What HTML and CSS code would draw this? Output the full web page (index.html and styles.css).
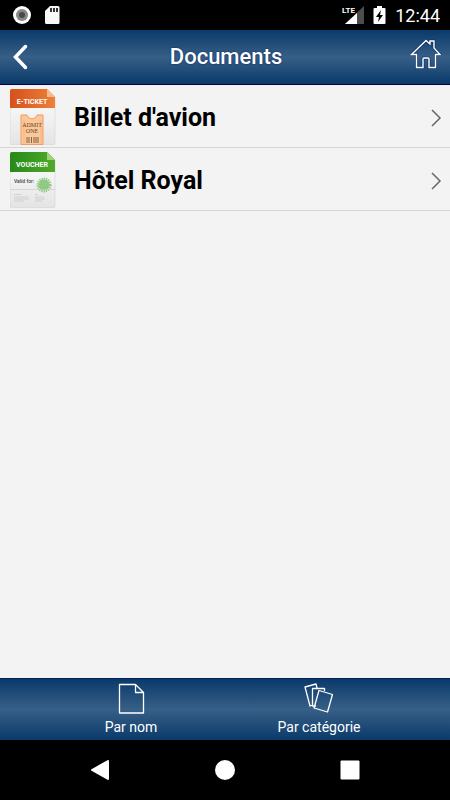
FILE: index.html
```html
<!DOCTYPE html>
<html lang="fr">
<head>
<meta charset="utf-8">
<meta name="viewport" content="width=device-width, initial-scale=1">
<title>Documents</title>
<link rel="stylesheet" href="styles.css">
</head>
<body>
<div class="status">
  <svg width="20" height="20" viewBox="0 0 20 20" aria-hidden="true">
    <circle cx="10" cy="10" r="9" fill="#fff"/>
    <circle cx="10" cy="10" r="6" fill="#888"/>
    <circle cx="10" cy="10" r="3" fill="#484848"/>
  </svg>
  <svg class="sd" width="16" height="20" viewBox="0 0 16 20" aria-hidden="true">
    <path d="M6 1h8q1.500 0 1.500 1.500v15q0 1.500-1.500 1.500H2.500Q1 19 1 17.500V6z" fill="#f8f8f8"/>
    <path d="M6 3h2v4H6zM9 3h2v4H9zM12 3h2v4h-2z" fill="#333"/>
  </svg>
  <span class="spacer"></span>
  <svg width="24" height="20" viewBox="0 0 24 20" aria-hidden="true">
    <path d="M4 19L23 1v18z" fill="#4d4d4d"/>
    <path d="M4 19L16 8v11z" fill="#fff"/>
    <path d="M0 0h14v9H0z" fill="#000"/>
    <text x="1" y="8" class="lte">LTE</text>
  </svg>
  <svg class="battery" width="14" height="20" viewBox="0 0 14 20" aria-hidden="true">
    <path d="M4 1h5v2h2.500q1 0 1 1v14q0 1-1 1h-10q-1 0-1-1V4q0-1 1-1H4z" fill="#fff"/>
    <path d="M8 5L3 12h3l-1 5 5-7H7z" fill="#000"/>
  </svg>
  <span class="clock">12:44</span>
</div>
<header class="bar">
  <button class="back" aria-label="Retour">
    <svg width="16" height="26" viewBox="0 0 16 26"><path d="M13.500 2.500L3.500 13l10 10.500" fill="none" stroke="#fff" stroke-width="3.500" stroke-linecap="round" stroke-linejoin="miter"/></svg>
  </button>
  <h1>Documents</h1>
  <button class="home" aria-label="Accueil">
    <svg width="32" height="32" viewBox="0 0 32 32"><path d="M6.500 16.500H1.500L16 2.500l4 3.500V3h4v7l6 6.500H25.500V29.500H19V21q0-1-1-1h-4q-1 0-1 1v8.500H6.500z" fill="none" stroke="#001f5c" stroke-opacity=".5" stroke-width="3"/><path d="M6.500 16.500H1.500L16 2.500l4 3.500V3h4v7l6 6.500H25.500V29.500H19V21q0-1-1-1h-4q-1 0-1 1v8.500H6.500z" fill="none" stroke="#fff" stroke-width="1.400"/></svg>
  </button>
</header>
<main>
  <ul class="list">
    <li><a href="#billet">
      <svg class="thumb" width="46" height="56" viewBox="0 0 46 56" aria-hidden="true">
        <defs>
          <linearGradient id="orange" x2="1" y2="0"><stop stop-color="#d5501b"/><stop offset="1" stop-color="#ee8039"/></linearGradient>
          <linearGradient id="paper" x2="0" y2="1"><stop stop-color="#fff"/><stop offset="1" stop-color="#e4e4e4"/></linearGradient>
        </defs>
        <path d="M0 2q0-2 2-2h35l8 8v46q0 2-2 2H2q-2 0-2-2z" fill="url(#paper)" stroke="#ccc" stroke-width=".5"/>
        <path d="M0 2q0-2 2-2h35l8 8v11H0z" fill="url(#orange)"/>
        <path d="M37 0l8 8h-8z" fill="#f9b98c"/>
        <text x="22" y="15" class="tag">E-TICKET</text>
        <path d="M11 55.500V26h6q1 4 5 4t5-4h6v29.500z" fill="#fdc797" stroke="#ee9e61"/>
        <path d="M14 31v24M31 31v24" stroke="#f9ae75" stroke-width=".7"/>
        <text x="22" y="38" class="admit">ADMIT</text>
        <text x="22" y="44" class="admit">ONE</text>
        <path d="M17 48v6M19 48v6M21.500 48v6M24 48v6M26 48v6M28 48v6" stroke="#806450"/>
      </svg>
      <span class="name">Billet d'avion</span>
      <svg class="chev" width="12" height="18" viewBox="0 0 12 18" aria-hidden="true"><path d="M2 1l8 8-8 8" fill="none" stroke="#666" stroke-width="1.500"/></svg>
    </a></li>
    <li><a href="#hotel">
      <svg class="thumb" width="46" height="56" viewBox="0 0 46 56" aria-hidden="true">
        <defs><linearGradient id="green" x2="1" y2="0"><stop stop-color="#258a16"/><stop offset="1" stop-color="#50aa2c"/></linearGradient></defs>
        <path d="M0 2q0-2 2-2h35l8 8v46q0 2-2 2H2q-2 0-2-2z" fill="url(#paper)" stroke="#ccc" stroke-width=".5"/>
        <path d="M0 2q0-2 2-2h35l8 8v12H0z" fill="url(#green)"/>
        <path d="M37 0l8 8h-8z" fill="#9bd47d"/>
        <text x="22" y="15" class="tag">VOUCHER</text>
        <text x="4" y="31" class="valid">Valid for:</text>
        <circle cx="34" cy="33" r="5.500" fill="#8fca84"/>
        <circle cx="34" cy="33" r="6" fill="none" stroke="#8fca84" stroke-width="3" stroke-dasharray="1.200 .900"/>
        <path d="M0 37.500h45" stroke="#ccc" stroke-width=".7"/>
        <path d="M4 42.500h7M4 45h14M4 47h15M4 49h10M25 42.500h3M25 45h9M25 47h10M25 49h7" stroke="#c6c6c6" stroke-width=".7"/>
      </svg>
      <span class="name">Hôtel Royal</span>
      <svg class="chev" width="12" height="18" viewBox="0 0 12 18" aria-hidden="true"><path d="M2 1l8 8-8 8" fill="none" stroke="#666" stroke-width="1.500"/></svg>
    </a></li>
  </ul>
</main>
<footer class="tabs">
  <button>
    <svg width="32" height="32" viewBox="0 0 32 32" aria-hidden="true"><path d="M4.500 1.500h16l8 8v20.500h-24zM20.500 1.500v8h8" fill="none" stroke="#fff" stroke-width="1.300" stroke-linejoin="round"/></svg>
    <span>Par nom</span>
  </button>
  <button>
    <svg width="32" height="32" viewBox="0 0 32 32" aria-hidden="true">
      <g fill="none" stroke="#fff" stroke-width="1.300" stroke-linejoin="round">
        <path d="M14 5L13 1 2 4l5 19 3-1M13 23H9.500V5.500h12V8M16 7.500l13.500 4-5 17.500L11 25z"/>
      </g>
    </svg>
    <span>Par catégorie</span>
  </button>
</footer>
<nav class="system">
  <button aria-label="Précédent"><svg width="20" height="20" viewBox="0 0 20 20"><path d="M18 1v18L2 10z" fill="#fff" stroke="#fff" stroke-width="2" stroke-linejoin="round"/></svg></button>
  <button aria-label="Écran d'accueil"><svg width="20" height="20" viewBox="0 0 20 20"><circle cx="10" cy="10" r="10" fill="#fff"/></svg></button>
  <button aria-label="Applications récentes"><svg width="20" height="20" viewBox="0 0 20 20"><rect x=".5" y=".5" width="19" height="19" rx="1" fill="#fff"/></svg></button>
</nav>
</body>
</html>
```
FILE: styles.css
```css
* { box-sizing: border-box; }
body {
  margin: 0;
  min-height: 100vh;
  display: flex;
  flex-direction: column;
  background: #f3f3f3;
  color: #000;
  font-family: Roboto, sans-serif;
}
svg { display: block; flex: none; }
button {
  margin: 0;
  padding: 0;
  border: 0;
  background: none;
  color: inherit;
  font: inherit;
}
.status {
  display: flex;
  align-items: center;
  height: 30px;
  padding: 0 10px 0 12px;
  background: #000;
  color: #fff;
}
.sd { margin-left: 12px; }
.spacer { flex: 1; }
.battery { margin: 0 8px; }
.lte { font: 700 8px Roboto, sans-serif; fill: #fff; }
.clock { font-size: 18px; line-height: 20px; padding-top: 2px; }
.bar, .tabs { background: linear-gradient(#0a3a6a, #375f87 50%, #0a3a6a); color: #fff; }
.bar {
  display: grid;
  grid-template-columns: 32px 1fr 32px;
  align-items: center;
  height: 55px;
  padding: 0 8px 0 10px;
  border-bottom: 1px solid #00004c;
}
h1 {
  margin: 0;
  text-align: center;
  font-size: 22px;
  line-height: 28px;
  font-weight: 500;
  text-shadow: 0 0 2px #001f5c;
}
.back { justify-self: start; padding-left: 2px; }
.home { justify-self: end; padding-bottom: 6px; }
main { flex: 1; }
.list { margin: 0; padding: 0; list-style: none; }
.list a {
  display: flex;
  align-items: center;
  height: 63px;
  padding: 5px 8px 2px 10px;
  border-bottom: 1px solid #d4d4d4;
  color: inherit;
  text-decoration: none;
}
.thumb { align-self: flex-start; margin-top: -1px; }
.name { flex: 1; margin-left: 18px; font-size: 25px; line-height: 30px; font-weight: 700; }
.tag { font: 700 7px Roboto, sans-serif; fill: #fff; text-anchor: middle; }
.admit { font: 400 6px "Liberation Serif", serif; fill: #5e4532; text-anchor: middle; }
.valid { font: 500 5px Roboto, sans-serif; fill: #444; }
.tabs {
  display: flex;
  height: 62px;
  padding: 0 37px;
  border-top: 1px solid #00205a;
}
.tabs button {
  flex: 1;
  display: flex;
  flex-direction: column;
  align-items: center;
  padding-top: 4px;
  font-size: 14px;
  line-height: 20px;
  gap: 2px;
}
.system {
  display: flex;
  height: 60px;
  padding: 0 37px;
  background: #000;
}
.system button { flex: 1; display: grid; place-items: center; }
```
